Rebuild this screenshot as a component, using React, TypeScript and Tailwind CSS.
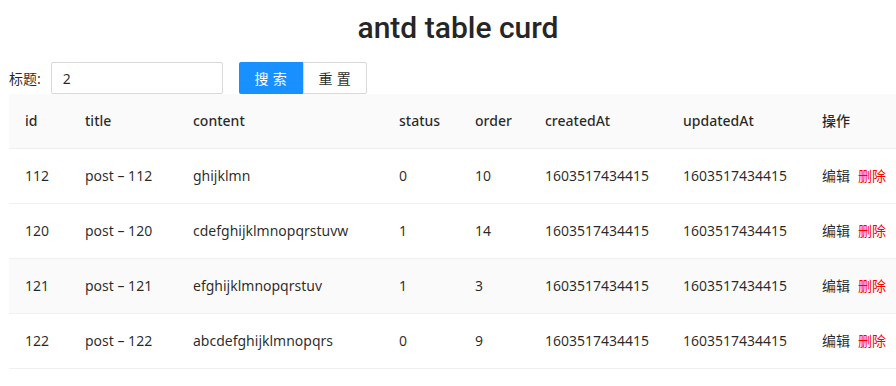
type Post = {
  id: number;
  title: string;
  content: string;
  status: number;
  order: number;
  createdAt: string;
  updatedAt: string;
};

const rows: Post[] = [
  { id: 112, title: "post – 112", content: "ghijklmn", status: 0, order: 10, createdAt: "1603517434415", updatedAt: "1603517434415" },
  { id: 120, title: "post – 120", content: "cdefghijklmnopqrstuvw", status: 1, order: 14, createdAt: "1603517434415", updatedAt: "1603517434415" },
  { id: 121, title: "post – 121", content: "efghijklmnopqrstuv", status: 1, order: 3, createdAt: "1603517434415", updatedAt: "1603517434415" },
  { id: 122, title: "post – 122", content: "abcdefghijklmnopqrs", status: 0, order: 9, createdAt: "1603517434415", updatedAt: "1603517434415" },
];

const cols = [
  { key: "id", label: "id", w: "w-[60px]" },
  { key: "title", label: "title", w: "w-[108px]" },
  { key: "content", label: "content", w: "w-[206px]" },
  { key: "status", label: "status", w: "w-[76px]" },
  { key: "order", label: "order", w: "w-[70px]" },
  { key: "createdAt", label: "createdAt", w: "w-[138px]" },
  { key: "updatedAt", label: "updatedAt", w: "w-[139px]" },
  { key: "op", label: "操作", w: "w-[96px]" },
];

export default function App() {
  return (
    <div className="w-[896px] h-[386px] overflow-hidden bg-white text-[14px] text-[rgba(0,0,0,0.85)] font-['Noto_Sans','Noto_Sans_CJK_SC',sans-serif]">
      <div className="ml-[9px] w-[898px]">
        <h1 className="h-[54px] flex items-center justify-center text-[30px] font-medium text-[#262626] font-['Roboto',sans-serif]">
          antd table curd
        </h1>

        <div className="mt-[8px] flex items-center h-[32px]">
          <label className="mr-[10px]">标题:</label>
          <input
            defaultValue="2"
            className="w-[172px] h-[32px] border border-[#d9d9d9] rounded-[2px] px-[11px] outline-none"
          />
          <button className="ml-[16px] w-[64px] h-[32px] bg-[#1890ff] text-white rounded-l-[2px] tracking-[0.3em] pl-[4px]">
            搜索
          </button>
          <button className="w-[64px] h-[32px] border border-[#d9d9d9] rounded-r-[2px] tracking-[0.3em] pl-[4px]">
            重置
          </button>
        </div>

        <table className="table-fixed border-collapse w-[893px]">
          <thead>
            <tr className="bg-[#fafafa] border-b border-[#f0f0f0]">
              {cols.map((c) => (
                <th key={c.key} className={`${c.w} h-[54px] px-[16px] text-left font-medium`}>
                  {c.label}
                </th>
              ))}
            </tr>
          </thead>
          <tbody>
            {rows.map((r, i) => (
              <tr key={r.id} className={`border-b border-[#f0f0f0] ${i === 2 ? "bg-[#fafafa]" : ""}`}>
                <td className="h-[55px] px-[16px]">{r.id}</td>
                <td className="px-[16px] whitespace-nowrap">{r.title}</td>
                <td className="px-[16px]">{r.content}</td>
                <td className="px-[16px]">{r.status}</td>
                <td className="px-[16px]">{r.order}</td>
                <td className="px-[16px]">{r.createdAt}</td>
                <td className="px-[16px]">{r.updatedAt}</td>
                <td className="px-[16px] whitespace-nowrap">
                  <span>编辑</span>
                  <span className="ml-[8px] text-[#ff0000]">删除</span>
                </td>
              </tr>
            ))}
          </tbody>
        </table>
      </div>
    </div>
  );
}
